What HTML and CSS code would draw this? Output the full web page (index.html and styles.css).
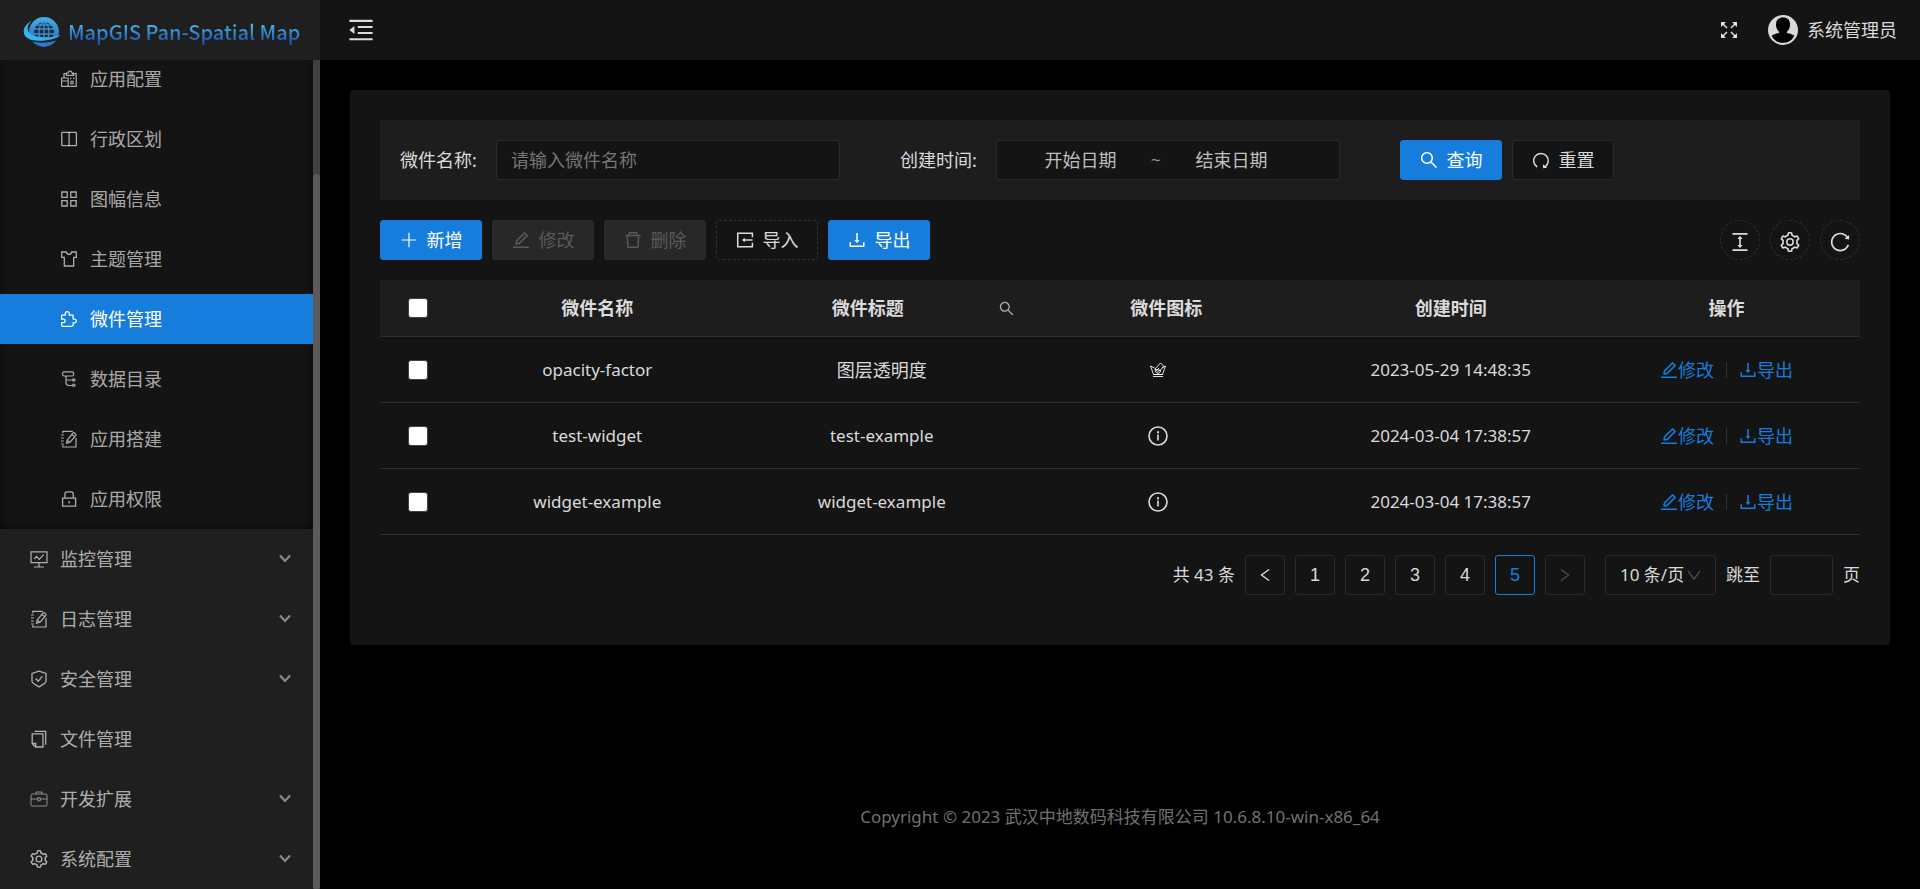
FILE: index.html
```html
<!DOCTYPE html>
<html lang="zh-CN">
<head>
<meta charset="utf-8">
<title>MapGIS Pan-Spatial Map</title>
<link rel="stylesheet" href="styles.css">
</head>
<body>
<svg class="sprite" aria-hidden="true">
  <symbol id="i-fold" viewBox="64 64 896 896"><path fill="currentColor" d="M400 370h512v72H400zM400 582h512v72H400zM112 160h800v72H112zM112 792h800v72H112zM112 512l174-137v274z"/></symbol>
  <symbol id="i-search" viewBox="64 64 896 896"><path fill="currentColor" d="M909.6 854.5L649.9 594.8C690.2 542.7 712 479 712 412c0-80.2-31.3-155.4-87.9-212.1-56.6-56.7-132-87.9-212.1-87.9s-155.5 31.3-212.1 87.9C143.2 256.5 112 331.8 112 412c0 80.1 31.3 155.5 87.9 212.1C256.5 680.8 331.8 712 412 712c67 0 130.6-21.8 182.7-62l259.7 259.6a8.2 8.2 0 0 0 11.6 0l43.6-43.5a8.2 8.2 0 0 0 0-11.600zM570.4 570.4C528 612.7 471.8 636 412 636s-116-23.3-158.4-65.6C211.3 528 188 471.8 188 412s23.3-116.1 65.6-158.4C296 211.3 352.2 188 412 188s116.1 23.2 158.4 65.6S636 352.2 636 412s-23.3 116.1-65.6 158.4z"/></symbol>
  <symbol id="i-plus" viewBox="64 64 896 896"><path fill="currentColor" d="M482 152h60v720h-60zM152 482h720v60H152z"/></symbol>
  <symbol id="i-edit" viewBox="64 64 896 896"><path fill="currentColor" d="M257.7 752c2 0 4-.2 6-.5L431.9 722c2-.4 3.900-1.300 5.300-2.800l423.900-423.900a9.960 9.960 0 0 0 0-14.100L694.900 114.900c-1.900-1.900-4.400-2.900-7.100-2.900s-5.200 1-7.100 2.900L256.800 538.800c-1.500 1.500-2.400 3.300-2.800 5.300l-29.500 168.200a33.500 33.500 0 0 0 9.400 29.800c6.600 6.400 14.900 9.900 23.800 9.900zm67.400-174.400L687.800 215l73.300 73.300-362.700 362.600-88.900 15.700 15.600-89zM880 836H144c-17.700 0-32 14.300-32 32v36c0 4.400 3.600 8 8 8h784c4.400 0 8-3.600 8-8v-36c0-17.700-14.300-32-32-32z"/></symbol>
  <symbol id="i-delete" viewBox="64 64 896 896"><path fill="currentColor" d="M360 184h304v72h72v-80c0-35.300-28.700-64-64-64H352c-35.300 0-64 28.700-64 64v80h72v-72zm504 72H160c-17.700 0-32 14.300-32 32v32c0 4.400 3.600 8 8 8h60.400l24.700 523c1.600 34.100 29.800 61 63.900 61h454c34.200 0 62.300-26.800 63.900-61l24.700-523H888c4.400 0 8-3.600 8-8v-32c0-17.700-14.300-32-32-32zM731.300 840H292.700l-24.200-512h487l-24.200 512z"/></symbol>
  <symbol id="i-download" viewBox="64 64 896 896"><path fill="currentColor" d="M505.700 661a8 8 0 0 0 12.600 0l112-141.700c4.100-5.200.4-12.900-6.300-12.900h-74.100V168c0-4.400-3.600-8-8-8h-60c-4.400 0-8 3.600-8 8v338.300H400c-6.700 0-10.400 7.700-6.300 12.900l112 141.800zM878 626h-60c-4.400 0-8 3.600-8 8v154H214V634c0-4.400-3.600-8-8-8h-60c-4.400 0-8 3.600-8 8v198c0 17.700 14.300 32 32 32h684c17.700 0 32-14.300 32-32V634c0-4.400-3.600-8-8-8z"/></symbol>
  <symbol id="i-import" viewBox="64 64 896 896"><path fill="none" stroke="currentColor" stroke-width="74" d="M880 370V181H149v662h731V654"/><path fill="currentColor" d="M362 512l142-112v76h384v72H504v76z"/></symbol>
  <symbol id="i-redo" viewBox="0 0 18 18"><path fill="none" stroke="currentColor" stroke-width="1.500" d="M5.200 16A7.300 7.300 0 1 1 13 15.800"/><path fill="currentColor" d="M11 13.200v4l4.200-.5z"/></symbol>
  <symbol id="i-setting" viewBox="64 64 896 896"><path fill="currentColor" d="M924.8 625.7l-65.5-56c3.1-19 4.7-38.4 4.7-57.8s-1.6-38.8-4.7-57.8l65.5-56a32.030 32.030 0 0 0 9.300-35.200l-.9-2.600a443.740 443.740 0 0 0-79.700-137.900l-1.800-2.100a32.120 32.120 0 0 0-35.100-9.500l-81.300 28.900c-30-24.600-63.500-44-99.700-57.600l-15.700-85a32.050 32.050 0 0 0-25.800-25.700l-2.700-.5c-52.100-9.400-106.900-9.400-159 0l-2.700.5a32.050 32.050 0 0 0-25.800 25.700l-15.800 85.400a351.860 351.860 0 0 0-99 57.400l-81.900-29.100a32 32 0 0 0-35.100 9.500l-1.800 2.100a446.020 446.020 0 0 0-79.700 137.900l-.9 2.600c-4.500 12.500-.8 26.500 9.300 35.200l66.300 56.600c-3.100 18.800-4.600 38-4.600 57.100 0 19.200 1.500 38.400 4.600 57.100L99 625.500a32.030 32.030 0 0 0-9.300 35.200l.9 2.600c18.100 50.400 44.900 96.900 79.700 137.900l1.800 2.100a32.120 32.120 0 0 0 35.100 9.500l81.900-29.100c29.800 24.500 63.100 43.900 99 57.400l15.800 85.400a32.050 32.050 0 0 0 25.800 25.700l2.700.5a449.400 449.400 0 0 0 159 0l2.700-.5a32.050 32.050 0 0 0 25.800-25.700l15.700-85a350 350 0 0 0 99.700-57.600l81.300 28.900a32 32 0 0 0 35.100-9.500l1.800-2.100c34.800-41.100 61.600-87.500 79.700-137.900l.9-2.600c4.500-12.300.8-26.300-9.300-35zM788.300 465.900c2.500 15.100 3.800 30.600 3.800 46.100s-1.300 31-3.800 46.100l-6.600 40.100 74.700 63.900a370.030 370.030 0 0 1-42.600 73.600L721 702.800l-31.400 25.800c-23.900 19.600-50.500 35-79.300 45.800l-38.100 14.300-17.900 97a377.500 377.500 0 0 1-85 0l-17.900-97.200-37.800-14.500c-28.500-10.800-55-26.200-78.700-45.700l-31.400-25.900-93.400 33.200c-17-22.900-31.200-47.600-42.600-73.600l75.500-64.500-6.500-40c-2.400-14.900-3.700-30.300-3.700-45.500 0-15.300 1.200-30.600 3.700-45.500l6.500-40-75.500-64.500c11.300-26.100 25.600-50.700 42.600-73.600l93.400 33.200 31.400-25.900c23.700-19.500 50.200-34.900 78.700-45.700l37.900-14.300 17.900-97.200c28.100-3.200 56.800-3.200 85 0l17.900 97 38.100 14.300c28.700 10.800 55.400 26.200 79.300 45.800l31.400 25.800 92.800-32.900c17 22.900 31.200 47.600 42.600 73.600L781.800 426l6.500 39.900z"/><circle cx="512" cy="512" r="142" fill="none" stroke="currentColor" stroke-width="68"/></symbol>
  <symbol id="i-reload" viewBox="64 64 896 896"><path fill="currentColor" d="M909.1 209.3l-56.400 44.100C775.800 155.100 656.200 92 521.900 92 290 92 102.300 279.500 102 511.500 101.700 743.700 289.800 932 521.900 932c181.300 0 335.800-115 394.600-276.100 1.500-4.200-.7-8.900-4.900-10.300l-56.700-19.500a8 8 0 0 0-10.100 4.800c-1.800 5-3.800 10-5.900 14.900-17.300 41-42.100 77.800-73.700 109.400A344.770 344.770 0 0 1 655.900 829c-42.300 17.900-87.400 27-133.800 27-46.500 0-91.500-9.100-133.800-27A341.500 341.500 0 0 1 279 755.200a342.160 342.160 0 0 1-73.700-109.400c-17.900-42.400-27-87.400-27-133.900s9.100-91.500 27-133.900c17.300-41 42.100-77.800 73.700-109.400 31.600-31.600 68.400-56.400 109.300-73.800 42.300-17.900 87.400-27 133.800-27 46.500 0 91.500 9.100 133.800 27a341.500 341.500 0 0 1 109.300 73.800c9.900 9.900 19.200 20.400 27.800 31.400l-60.200 47a8 8 0 0 0 3 14.100l175.600 43c5 1.200 9.900-2.600 9.900-7.700l.8-180.900c-.1-6.600-7.800-10.300-13-6.200z"/></symbol>
  <symbol id="i-height" viewBox="64 64 896 896"><path fill="currentColor" d="M176 836h672v76H176zM176 112h672v76H176zM610.800 378c6 0 9.400-7 5.700-11.700L515.700 238.700a7.140 7.140 0 0 0-11.300 0L403.600 366.300a7.230 7.230 0 0 0 5.700 11.700H476v268h-62.800c-6 0-9.400 7-5.700 11.700l100.800 127.500c2.900 3.700 8.500 3.700 11.300 0l100.800-127.500c3.700-4.700.4-11.700-5.700-11.700H548V378h62.800z"/></symbol>
  <symbol id="i-info" viewBox="0 0 20 20"><circle cx="10" cy="10" r="9" fill="none" stroke="currentColor" stroke-width="1.600"/><path fill="currentColor" d="M9.200 8.600h1.600v6H9.200zM9 5.300h2v1.900H9z"/></symbol>
  <symbol id="i-down" viewBox="0 0 12 12"><path fill="none" stroke="currentColor" stroke-width="2" d="M1 2.500l5 5.500 5-5.500"/></symbol>
  <symbol id="i-down-thin" viewBox="0 0 14 14"><path fill="none" stroke="currentColor" stroke-width="1.200" d="M1 3l6 8 6-8"/></symbol>
  <symbol id="i-left" viewBox="0 0 14 14"><path fill="none" stroke="currentColor" stroke-width="1.400" d="M11 1.500L3.500 7l7.500 5.500"/></symbol>
  <symbol id="i-right" viewBox="0 0 14 14"><path fill="none" stroke="currentColor" stroke-width="1.400" d="M3 1.500L10.500 7 3 12.500"/></symbol>
  <symbol id="i-shrink" viewBox="0 0 18 18"><g fill="none" stroke="currentColor" stroke-width="1.500"><path d="M2.500 2.500L7 7M15.500 2.500L11 7M2.500 15.500L7 11M15.500 15.500L11 11"/></g><path fill="currentColor" d="M1 1h5L1 6zM17 1h-5l5 5zM1 17h5l-5-5zM17 17h-5l5-5z"/></symbol>
  <symbol id="i-app" viewBox="0 0 18 18"><g fill="none" stroke="currentColor" stroke-width="1.200"><path d="M4 7.500V3.600h2.500M12 3.600h4.200v12.800H8.500M1.600 8h6.600v8.400H1.600zM1.600 11h6.600M6.500 4.800V3h1.800a1.800 1.800 0 0 1 3.600 0h1.600v2.300h-7z"/><circle cx="12" cy="12.500" r="1.300"/><path d="M10 8.300h1.500M13 8.300h1.500"/></g></symbol>
  <symbol id="i-columns" viewBox="0 0 18 18"><rect x="1.800" y="2.300" width="14.600" height="13.400" rx=".6" fill="none" stroke="currentColor" stroke-width="1.300"/><path stroke="currentColor" stroke-width="1.300" d="M9.100 2v14"/></symbol>
  <symbol id="i-grid" viewBox="0 0 18 18"><path fill="none" stroke="currentColor" stroke-width="1.300" d="M1.800 2h5.400v5.400H1.800zM10.800 2h5.400v5.400h-5.400zM1.800 10.600h5.400V16H1.800zM10.800 10.600h5.400V16h-5.400z"/></symbol>
  <symbol id="i-skin" viewBox="0 0 18 18"><path fill="none" stroke="currentColor" stroke-width="1.300" d="M1.700 2h4.600c.4 1.700 1.300 2.300 2.700 2.300s2.300-.6 2.700-2.300h4.600v5.300h-2.600V16H4.300V7.300H1.700z"/></symbol>
  <symbol id="i-widget" viewBox="0 0 18 18"><path fill="none" stroke="currentColor" stroke-width="1.300" stroke-linejoin="round" d="M1.600 5.200H5.300V3.600a1.900 1.900 0 0 1 3.900 0v1.600h3.900v3.900h1.400a1.800 1.800 0 0 1 0 3.700h-1.400v2.700l-1 .8H2.500l-.9-.8v-2.800h1.800a1.700 1.700 0 0 0 0-3.500H1.600z"/></symbol>
  <symbol id="i-tree" viewBox="0 0 18 18"><g fill="none" stroke="currentColor" stroke-width="1.200"><rect x="2.600" y="1.800" width="11" height="4.200" rx="1.500"/><path d="M6 6v6.500c0 2 1 3 3 3h3.500M6 10h6.500"/><circle cx="13.800" cy="10" r="1.200"/><circle cx="13.800" cy="15.200" r="1.200"/></g></symbol>
  <symbol id="i-note" viewBox="0 0 18 18"><g fill="none" stroke="currentColor" stroke-width="1.200"><path d="M2.800 3.200V1.300h10M16 8v9H2.800v-1.800M1 5h2.800M1 8h2.800M1 11h2.800M1 14h2.800"/><path d="M6.500 13.400l.7-3.300 5.600-7c.9-1.100 4 .8 3.100 2.200l-5.600 6.700zM11.800 4.400l3 2.200M7.200 10.300l2.800 2"/></g></symbol>
  <symbol id="i-lock" viewBox="0 0 18 18"><path fill="none" stroke="currentColor" stroke-width="1.300" d="M2.600 8.200h13v7.900h-13zM4.900 8V4.200q0-2.400 2.200-2.400h4q2.200 0 2.200 2.400V8M9.100 11v2.500"/></symbol>
  <symbol id="i-monitor" viewBox="0 0 18 18"><path fill="none" stroke="currentColor" stroke-width="1.200" d="M1 1.800h16v10.800H1zM9 13v3.800M4 17h10M4.200 9l2.300-2.600 2.700 3 4.500-4.800"/></symbol>
  <symbol id="i-shield" viewBox="0 0 18 18"><path fill="none" stroke="currentColor" stroke-width="1.300" d="M9 1.200l7 2.300v7.800q0 2-7 5.500-7-3.500-7-5.500V3.500zM5.600 8.500l2.700 2.800 4-5.200"/></symbol>
  <symbol id="i-files" viewBox="0 0 18 18"><g fill="none" stroke="currentColor" stroke-width="1.300"><path d="M2.200 3.800H13V17H5.400l-3.200-3.200zM2.500 13.500h3.200v3.200"/><path d="M4.500 1.300h11.200v13.500"/></g></symbol>
  <symbol id="i-case" viewBox="0 0 18 18"><g fill="none" stroke="currentColor" stroke-width="1" opacity=".75"><rect x="1" y="4" width="16" height="12" rx="1.200"/><path d="M6 4V2h6v2M1 9h6.800M10.200 9H17"/><rect x="7.800" y="7.800" width="2.400" height="3"/></g></symbol>
  <symbol id="i-opacity" viewBox="0 0 18 18"><g fill="none" stroke="currentColor" stroke-width="1"><path d="M1.500 5l3 8.500h9l3-8.500M1.500 5l4 2M16.500 5l-3.500 2M4 15.500h10M4.500 13.500h9M6 8l5.500-6 3 3-3 4.500zM6 8q0 4 3 4.500 3-1 2.500-3M7 10l3-3M8 11.500l3-3"/></g></symbol>
</svg>

<header class="header">
  <a class="brand" href="#">
    <svg class="brand-mark" viewBox="0 0 38 32" aria-hidden="true">
      <defs><linearGradient id="globe" x1="0" y1="0" x2="0" y2="1"><stop offset="0" stop-color="#45b0ea"/><stop offset="1" stop-color="#2460b8"/></linearGradient></defs>
      <circle cx="21" cy="16" r="15" fill="url(#globe)"/>
      <circle cx="21" cy="16" r="10" fill="#1f2a38"/>
      <g fill="none" stroke="#3d8fd0" stroke-width="1.300"><path d="M21 6v20M11 13h20M11 18h20M13 9h16"/><ellipse cx="21" cy="16" rx="5" ry="10"/></g>
      <path fill="#3478c8" d="M9 22h24l-3 5-9 4-9-4z"/>
      <path fill="#1f1f1f" d="M5 22.500q15 5 31-1.500l-1 3q-14 5-27 1z"/>
      <path fill="#2fb4ee" d="M9 4.500C3 10 3 16 10 19.500c8 2.500 19 2.500 28-.5-8 5.500-24 7-31 4.500C-2 20-1.500 10 9 4.500z"/>
    </svg>
    <span class="brand-name">MapGIS Pan-Spatial Map</span>
  </a>
  <button class="icon-button fold" aria-label="收起菜单"><svg><use href="#i-fold"/></svg></button>
  <div class="header-tools">
    <button class="icon-button" aria-label="全屏"><svg><use href="#i-shrink"/></svg></button>
    <a class="user" href="#">
      <svg class="avatar" viewBox="0 0 30 30" aria-hidden="true"><circle cx="15" cy="15" r="15" fill="#d9d9d9"/><path d="M15 2.500c4.800 0 7.200 2.900 7 7.400-.1 2.600-1.300 5.400-3.200 7l.2 1c3.500.8 6 1.400 7.400 2.800A12.800 12.800 0 0 1 15 27.800 12.800 12.800 0 0 1 3.600 20.700c1.400-1.400 3.900-2 7.400-2.800l.2-1c-1.900-1.600-3.100-4.400-3.200-7C7.800 5.400 10.200 2.500 15 2.500z"/></svg>
      <span>系统管理员</span>
    </a>
  </div>
</header>

<div class="body">
  <aside class="sidebar">
    <nav class="menu">
      <div class="submenu">
        <a href="#" class="item sub"><svg><use href="#i-app"/></svg><span>应用配置</span></a>
        <a href="#" class="item sub"><svg><use href="#i-columns"/></svg><span>行政区划</span></a>
        <a href="#" class="item sub"><svg><use href="#i-grid"/></svg><span>图幅信息</span></a>
        <a href="#" class="item sub"><svg><use href="#i-skin"/></svg><span>主题管理</span></a>
        <a href="#" class="item sub active" aria-current="page"><svg><use href="#i-widget"/></svg><span>微件管理</span></a>
        <a href="#" class="item sub"><svg><use href="#i-tree"/></svg><span>数据目录</span></a>
        <a href="#" class="item sub"><svg><use href="#i-note"/></svg><span>应用搭建</span></a>
        <a href="#" class="item sub"><svg><use href="#i-lock"/></svg><span>应用权限</span></a>
      </div>
      <div class="root">
        <a href="#" class="item"><svg><use href="#i-monitor"/></svg><span>监控管理</span><svg class="caret"><use href="#i-down"/></svg></a>
        <a href="#" class="item"><svg><use href="#i-note"/></svg><span>日志管理</span><svg class="caret"><use href="#i-down"/></svg></a>
        <a href="#" class="item"><svg><use href="#i-shield"/></svg><span>安全管理</span><svg class="caret"><use href="#i-down"/></svg></a>
        <a href="#" class="item"><svg><use href="#i-files"/></svg><span>文件管理</span></a>
        <a href="#" class="item"><svg><use href="#i-case"/></svg><span>开发扩展</span><svg class="caret"><use href="#i-down"/></svg></a>
        <a href="#" class="item"><svg><use href="#i-setting"/></svg><span>系统配置</span><svg class="caret"><use href="#i-down"/></svg></a>
      </div>
    </nav>
    <div class="scrollbar"><div class="thumb"></div></div>
  </aside>

  <main class="main">
    <section class="panel">
      <form class="search">
        <div class="field">
          <label for="widget-name">微件名称:</label>
          <input id="widget-name" class="box" type="text" placeholder="请输入微件名称">
        </div>
        <div class="field">
          <label for="date-from">创建时间:</label>
          <div class="box range">
            <input id="date-from" type="text" placeholder="开始日期">
            <span>~</span>
            <input type="text" placeholder="结束日期" aria-label="结束日期">
          </div>
        </div>
        <div class="buttons">
          <button type="button" class="btn primary"><svg><use href="#i-search"/></svg>查询</button>
          <button type="button" class="btn"><svg><use href="#i-redo"/></svg>重置</button>
        </div>
      </form>

      <div class="toolbar">
        <div class="buttons">
          <button class="btn primary"><svg><use href="#i-plus"/></svg>新增</button>
          <button class="btn" disabled><svg><use href="#i-edit"/></svg>修改</button>
          <button class="btn" disabled><svg><use href="#i-delete"/></svg>删除</button>
          <button class="btn dashed"><svg><use href="#i-import"/></svg>导入</button>
          <button class="btn primary"><svg><use href="#i-download"/></svg>导出</button>
        </div>
        <div class="buttons">
          <button class="round" aria-label="密度"><svg><use href="#i-height"/></svg></button>
          <button class="round" aria-label="列设置"><svg><use href="#i-setting"/></svg></button>
          <button class="round" aria-label="刷新"><svg><use href="#i-reload"/></svg></button>
        </div>
      </div>

      <table class="table">
        <colgroup><col class="col-check"><col><col><col><col><col class="col-action"></colgroup>
        <thead>
          <tr>
            <th><input type="checkbox" aria-label="全选"></th>
            <th>微件名称</th>
            <th><div class="filter-head"><span>微件标题</span><button aria-label="搜索微件标题"><svg><use href="#i-search"/></svg></button></div></th>
            <th>微件图标</th>
            <th>创建时间</th>
            <th>操作</th>
          </tr>
        </thead>
        <tbody>
          <tr>
            <td><input type="checkbox" aria-label="选择 opacity-factor"></td>
            <td>opacity-factor</td>
            <td class="zh">图层透明度</td>
            <td><svg class="glyph small"><use href="#i-opacity"/></svg></td>
            <td>2023-05-29 14:48:35</td>
            <td><div class="actions"><a href="#"><svg><use href="#i-edit"/></svg>修改</a><i></i><a href="#"><svg><use href="#i-download"/></svg>导出</a></div></td>
          </tr>
          <tr>
            <td><input type="checkbox" aria-label="选择 test-widget"></td>
            <td>test-widget</td>
            <td>test-example</td>
            <td><svg class="glyph"><use href="#i-info"/></svg></td>
            <td>2024-03-04 17:38:57</td>
            <td><div class="actions"><a href="#"><svg><use href="#i-edit"/></svg>修改</a><i></i><a href="#"><svg><use href="#i-download"/></svg>导出</a></div></td>
          </tr>
          <tr>
            <td><input type="checkbox" aria-label="选择 widget-example"></td>
            <td>widget-example</td>
            <td>widget-example</td>
            <td><svg class="glyph"><use href="#i-info"/></svg></td>
            <td>2024-03-04 17:38:57</td>
            <td><div class="actions"><a href="#"><svg><use href="#i-edit"/></svg>修改</a><i></i><a href="#"><svg><use href="#i-download"/></svg>导出</a></div></td>
          </tr>
        </tbody>
      </table>

      <div class="pagination">
        <span>共 43 条</span>
        <button class="page" aria-label="上一页"><svg><use href="#i-left"/></svg></button>
        <button class="page">1</button>
        <button class="page">2</button>
        <button class="page">3</button>
        <button class="page">4</button>
        <button class="page current" aria-current="page">5</button>
        <button class="page" disabled aria-label="下一页"><svg><use href="#i-right"/></svg></button>
        <div class="size">
          <select aria-label="每页条数"><option>10 条/页</option></select>
          <svg aria-hidden="true"><use href="#i-down-thin"/></svg>
        </div>
        <label for="jump">跳至</label>
        <input id="jump" class="jump" type="text">
        <span>页</span>
      </div>
    </section>
    <footer class="footer">Copyright © 2023 武汉中地数码科技有限公司 10.6.8.10-win-x86_64</footer>
  </main>
</div>
</body>
</html>
```
FILE: styles.css
```css
:root {
  --blue: #177ddc;
  --text: rgba(255, 255, 255, .85);
  --muted: rgba(255, 255, 255, .65);
  --surface: #141414;
  --raised: #1d1d1d;
  --menu: #1f1f1f;
  --line: #303030;
  --border: #2a2a2a;
}

* { box-sizing: border-box; }

body {
  margin: 0;
  height: 100vh;
  display: flex;
  flex-direction: column;
  overflow: hidden;
  background: #000;
  color: var(--text);
  font: 18px/28px "Noto Sans", "Noto Sans CJK SC", sans-serif;
}

a { color: inherit; text-decoration: none; }
svg { display: block; flex: none; width: 18px; height: 18px; }
button, input, select { font: inherit; color: inherit; margin: 0; }
button { cursor: pointer; }
.sprite { display: none; }

/* Header */
.header {
  flex: none;
  height: 60px;
  display: flex;
  align-items: center;
  background: var(--surface);
  z-index: 1;
}
.brand {
  width: 320px;
  height: 100%;
  padding: 4px 0 0 23px;
  display: flex;
  align-items: center;
  gap: 7px;
  background: var(--menu);
}
.brand-mark { width: 38px; height: 32px; }
.brand-name {
  font: 500 20px/30px "Noto Sans CJK SC", sans-serif;
  white-space: nowrap;
  color: transparent;
  background: linear-gradient(#46bdf0 20%, #2351a8 85%);
  -webkit-background-clip: text;
  background-clip: text;
}
.icon-button { padding: 0; border: 0; background: none; }
.fold { margin-left: 28px; }
.fold svg { width: 26px; height: 26px; }
.header-tools {
  margin-left: auto;
  padding-right: 23px;
  display: flex;
  align-items: center;
  gap: 30px;
}
.user { display: flex; align-items: center; gap: 9px; }
.avatar { width: 30px; height: 30px; }

/* Sidebar */
.body { flex: 1; min-height: 0; display: flex; }
.sidebar {
  width: 320px;
  flex: none;
  display: flex;
  overflow: hidden;
  background: var(--menu);
}
.menu { flex: 1; margin-top: -6px; }
.submenu, .root { display: flex; flex-direction: column; gap: 10px; }
.submenu {
  padding-bottom: 5px;
  background: var(--surface);
  box-shadow: inset 0 0 10px rgba(0, 0, 0, .5);
}
.root { padding-top: 5px; }
.item {
  height: 50px;
  padding: 0 22px 0 30px;
  display: flex;
  align-items: center;
  gap: 12px;
  color: var(--muted);
}
.item.sub { padding-left: 60px; }
.item.active { background: var(--blue); color: #fff; }
.caret { width: 12px; height: 12px; margin-left: auto; color: #8c8c8c; }
.scrollbar { width: 7px; background: #404040; padding-top: 114px; }
.thumb { height: 100%; border-radius: 4px; background: #5a5a5a; }

/* Content */
.main {
  flex: 1;
  min-width: 0;
  padding: 30px 30px 58px;
  display: flex;
  flex-direction: column;
  justify-content: space-between;
}
.panel { padding: 30px 30px 50px; border-radius: 3px; background: var(--surface); }

.search {
  padding: 20px;
  display: grid;
  grid-template-columns: repeat(3, minmax(0, 1fr));
  gap: 60px;
  background: var(--raised);
}
.field { display: flex; align-items: center; }
.field label { width: 96px; flex: none; }
.box {
  flex: 1;
  min-width: 0;
  height: 40px;
  padding: 0 14px;
  border: 1px solid var(--border);
  border-radius: 3px;
  background: var(--surface);
  outline: 0;
}
.box::placeholder { color: #757575; opacity: 1; }
.range { display: flex; align-items: center; padding-right: 38px; }
.range input {
  flex: 1;
  min-width: 0;
  padding: 0;
  border: 0;
  background: none;
  text-align: center;
  outline: 0;
}
.range input::placeholder { color: #bfbfbf; opacity: 1; }
.range span { width: 12px; text-align: center; color: #8c8c8c; }

.buttons { display: flex; gap: 10px; }
.btn {
  width: 102px;
  height: 40px;
  padding: 0;
  display: flex;
  align-items: center;
  justify-content: center;
  gap: 9px;
  border: 1px solid var(--border);
  border-radius: 3px;
  background: var(--surface);
}
.btn.primary { border-color: var(--blue); background: var(--blue); color: #fff; }
.btn.dashed { border-style: dashed; border-color: var(--line); }
.btn:disabled { background: #282828; color: #5a5a5a; }

.toolbar { padding: 20px 0; display: flex; justify-content: space-between; }
.round {
  width: 40px;
  height: 40px;
  padding: 3px 0 0;
  display: grid;
  place-items: center;
  border: 1px dashed var(--line);
  border-radius: 50%;
  background: none;
}
.round svg { width: 20px; height: 20px; }

/* Table */
.table { width: 100%; table-layout: fixed; border-spacing: 0; }
.col-check { width: 75px; }
.col-action { width: 267px; }
th, td { padding: 0; border-bottom: 1px solid var(--line); text-align: center; }
th { height: 57px; background: var(--raised); font-weight: 700; }
td { height: 66px; font-size: 17px; }
td.zh { font-size: 18px; }
input[type="checkbox"] {
  appearance: none;
  display: block;
  width: 20px;
  height: 20px;
  margin: 0 auto;
  border: 1px solid #434343;
  border-radius: 3px;
  background: #fff;
}
.filter-head { display: flex; align-items: center; padding-right: 8px; }
.filter-head span { flex: 1; }
.filter-head button { width: 20px; padding: 0; border: 0; background: none; color: var(--muted); }
.filter-head svg { width: 15px; height: 15px; margin: 0 auto; }
.glyph { width: 36px; height: 20px; margin: 0 auto; padding-right: 16px; }
.glyph.small { height: 18px; }
.actions {
  display: flex;
  align-items: center;
  justify-content: center;
  gap: 12px;
  color: var(--blue);
  font-size: 18px;
}
.actions a { display: flex; align-items: center; }
.actions i { width: 1px; height: 16px; background: var(--line); }

/* Pagination */
.pagination {
  padding-top: 20px;
  display: flex;
  align-items: center;
  justify-content: flex-end;
  gap: 10px;
  font-size: 17px;
}
.page {
  width: 40px;
  height: 40px;
  padding: 0;
  display: grid;
  place-items: center;
  border: 1px solid var(--border);
  border-radius: 3px;
  background: none;
  font-family: "Liberation Sans", Arial, sans-serif;
  font-size: 18px;
}
.page svg { width: 14px; height: 14px; }
.page.current { border-color: var(--blue); color: var(--blue); }
.page:disabled { color: #4d4d4d; }
.size { position: relative; margin-left: 10px; }
.size select {
  appearance: none;
  display: block;
  width: 111px;
  height: 40px;
  padding: 0 14px;
  border: 1px solid var(--border);
  border-radius: 3px;
  background: var(--surface);
}
.size svg {
  position: absolute;
  right: 15px;
  top: 13px;
  width: 14px;
  height: 14px;
  color: #5a5a5a;
  pointer-events: none;
}
.jump {
  width: 63px;
  height: 40px;
  border: 1px solid var(--border);
  border-radius: 3px;
  background: none;
}

.footer { text-align: center; font-size: 17px; color: rgba(255, 255, 255, .45); }
```
